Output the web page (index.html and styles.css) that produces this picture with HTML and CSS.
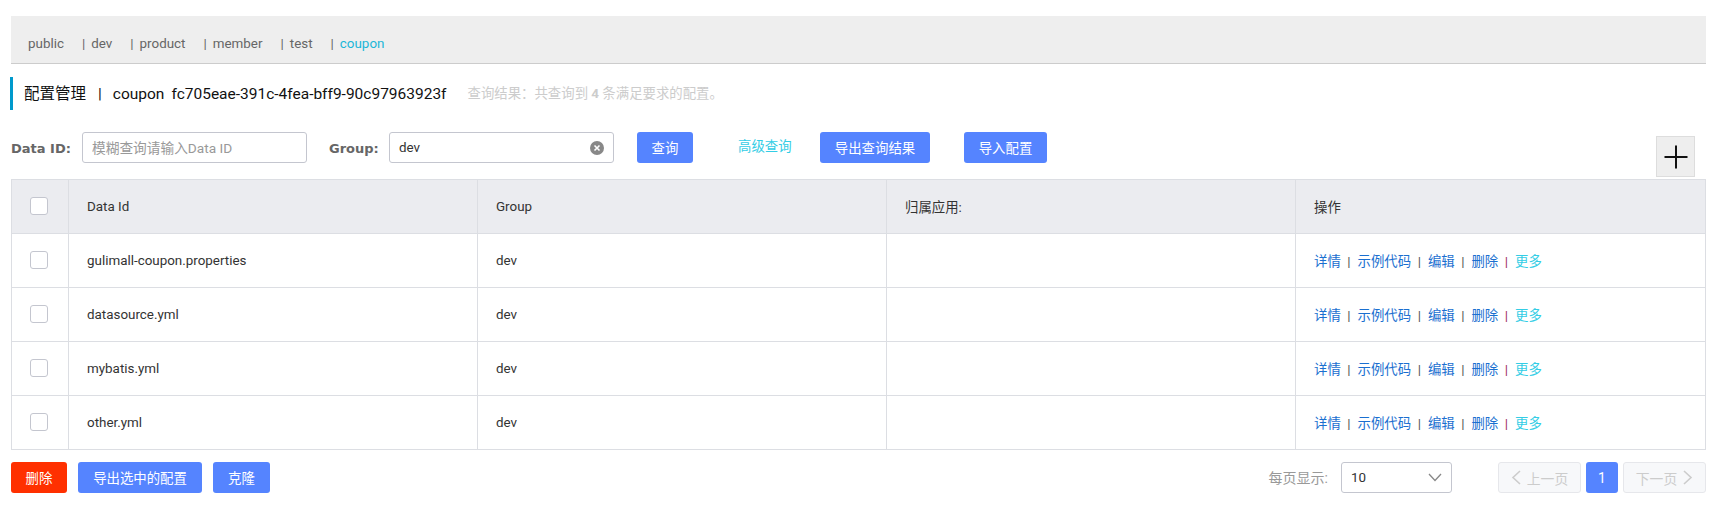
FILE: index.html
```html
<!DOCTYPE html>
<html>
<head>
    <title>配置管理</title>
    <link rel="stylesheet" href="styles.css">
</head>
<body>
    <div class="tabs">
        <span class="tab">public</span>
        <span class="tab"><i>|</i>dev</span>
        <span class="tab"><i>|</i>product</span>
        <span class="tab"><i>|</i>member</span>
        <span class="tab"><i>|</i>test</span>
        <span class="tab active"><i>|</i>coupon</span>
    </div>
    <div class="title">
        <span class="title-main">配置管理<i class="title-sep">|</i>coupon<span class="title-ns">fc705eae-391c-4fea-bff9-90c97963923f</span></span>
        <span class="title-result">查询结果：共查询到 <b>4</b> 条满足要求的配置。</span>
    </div>
    <div class="search">
        <label class="search-label">Data ID:</label>
        <div class="input input-id"><span class="placeholder">模糊查询请输入Data ID</span></div>
        <label class="search-label label-group">Group:</label>
        <div class="input input-group">
            <span>dev</span>
            <svg class="clear" width="14" height="14" viewBox="0 0 14 14">
                <circle cx="7" cy="7" r="7" fill="#888"/>
                <path d="M4.5 4.5l5 5M9.5 4.5l-5 5" stroke="#fff" stroke-width="1.6"/>
            </svg>
        </div>
        <button class="btn btn-query">查询</button>
        <a class="advanced">高级查询</a>
        <button class="btn btn-export">导出查询结果</button>
        <button class="btn btn-import">导入配置</button>
        <div class="add">
            <svg width="24" height="24" viewBox="0 0 24 24">
                <path d="M12 .5v23M.5 12h23" stroke="#111" stroke-width="2"/>
            </svg>
        </div>
    </div>
    <table class="list">
        <thead>
            <tr>
                <th class="col-check"><span class="check"></span></th>
                <th class="col-id">Data Id</th>
                <th class="col-group">Group</th>
                <th class="col-app cjk">归属应用:</th>
                <th class="cjk">操作</th>
            </tr>
        </thead>
        <tbody>
            <tr>
                <td class="col-check"><span class="check"></span></td>
                <td>gulimall-coupon.properties</td>
                <td>dev</td>
                <td></td>
                <td class="ops cjk"><a>详情</a><i>|</i><a>示例代码</a><i>|</i><a>编辑</a><i>|</i><a>删除</a><i class="last">|</i><a class="more">更多</a></td>
            </tr>
            <tr>
                <td class="col-check"><span class="check"></span></td>
                <td>datasource.yml</td>
                <td>dev</td>
                <td></td>
                <td class="ops cjk"><a>详情</a><i>|</i><a>示例代码</a><i>|</i><a>编辑</a><i>|</i><a>删除</a><i class="last">|</i><a class="more">更多</a></td>
            </tr>
            <tr>
                <td class="col-check"><span class="check"></span></td>
                <td>mybatis.yml</td>
                <td>dev</td>
                <td></td>
                <td class="ops cjk"><a>详情</a><i>|</i><a>示例代码</a><i>|</i><a>编辑</a><i>|</i><a>删除</a><i class="last">|</i><a class="more">更多</a></td>
            </tr>
            <tr>
                <td class="col-check"><span class="check"></span></td>
                <td>other.yml</td>
                <td>dev</td>
                <td></td>
                <td class="ops cjk"><a>详情</a><i>|</i><a>示例代码</a><i>|</i><a>编辑</a><i>|</i><a>删除</a><i class="last">|</i><a class="more">更多</a></td>
            </tr>
        </tbody>
    </table>
    <div class="footer">
        <button class="btn btn-delete">删除</button>
        <button class="btn btn-selected">导出选中的配置</button>
        <button class="btn btn-clone">克隆</button>
        <span class="page-size-label">每页显示:</span>
        <div class="select">
            <span>10</span>
            <svg width="14" height="9" viewBox="0 0 14 9">
                <path d="M1 1l6 6.5L13 1" fill="none" stroke="#888" stroke-width="1.3"/>
            </svg>
        </div>
        <button class="page page-prev">
            <svg width="10" height="15" viewBox="0 0 10 15"><path d="M9 1L2 7.5l7 6.5" fill="none" stroke="#ccc" stroke-width="1.6"/></svg>
            上一页
        </button>
        <button class="page page-current">1</button>
        <button class="page page-next">
            下一页
            <svg width="10" height="15" viewBox="0 0 10 15"><path d="M1 1l7 6.5-7 6.5" fill="none" stroke="#ccc" stroke-width="1.6"/></svg>
        </button>
    </div>
</body>
</html>
```

FILE: styles.css
```css
* {
    box-sizing: border-box;
}
body {
    margin: 0;
    padding: 16px 10px 0 11px;
    font-family: Roboto, "Noto Sans CJK SC", sans-serif;
    font-size: 13.4px;
    color: #333;
    background-color: #fff;
}
i {
    font-style: normal;
}
.tabs {
    height: 48px;
    padding: 7px 0 0 17px;
    display: flex;
    align-items: center;
    background-color: #eee;
    border-bottom: 1px solid #ccc;
    color: #666;
}
.tab {
    margin-right: 18px;
}
.tab i {
    margin-right: 6px;
}
.tab.active {
    color: #1cb6d8;
}
.tab.active i {
    color: #666;
}
.title {
    height: 33px;
    margin: 13px 0 0 -1px;
    padding: 0 0 4px 11px;
    display: flex;
    align-items: center;
    border-left: 3px solid #09c;
}
.title-main {
    font-size: 15.5px;
    color: #111;
}
.title-sep {
    margin: 0 11px 0 12px;
}
.title-ns {
    margin-left: 7px;
}
.title-result {
    margin-left: 21px;
    font-size: 13.4px;
    color: #ccc;
}
.search {
    height: 47px;
    margin-top: 22px;
    display: flex;
    align-items: flex-start;
}
.search-label {
    width: 71px;
    font-family: "DejaVu Sans", sans-serif;
    font-size: 13px;
    line-height: 33px;
    font-weight: bold;
    color: #666;
}
.label-group {
    width: 60px;
    margin-left: 22px;
}
.input {
    height: 31px;
    padding: 0 10px 0 9px;
    display: flex;
    align-items: center;
    justify-content: space-between;
    border: 1px solid #c4c6cf;
    border-radius: 3px;
}
.input-id {
    width: 225px;
    padding-bottom: 2px;
}
.input-group {
    width: 225px;
    color: #333;
}
.placeholder {
    font-size: 13.7px;
    color: #999;
}
.clear {
    margin-right: -1px;
}
.btn {
    height: 31px;
    padding: 0 0 2px;
    border: none;
    border-radius: 3px;
    font-family: inherit;
    font-size: 13.4px;
    color: #fff;
    background-color: #5584ff;
}
.btn-query {
    width: 56px;
    margin-left: 23px;
}
.advanced {
    width: 56px;
    margin-left: 45px;
    line-height: 30px;
    color: #33cde5;
}
.btn-export {
    width: 110px;
    margin-left: 26px;
}
.btn-import {
    width: 83px;
    margin-left: 34px;
}
.add {
    width: 39px;
    height: 41px;
    margin: 4px 11px 0 auto;
    display: flex;
    align-items: center;
    justify-content: center;
    background-color: #eee;
    border: 1px solid #ddd;
}
.list {
    width: 1695px;
    border-collapse: collapse;
    table-layout: fixed;
}
.list th,
.list td {
    height: 54px;
    padding: 0 18px;
    text-align: left;
    font-weight: normal;
    border: 1px solid #dcdee3;
}
.list th {
    background-color: #ebecf0;
}
.list .cjk {
    padding-bottom: 2px;
}
.list .col-check {
    width: 57px;
    padding: 0;
}
.col-id,
.col-group,
.col-app {
    width: 409px;
}
.check {
    width: 18px;
    height: 18px;
    display: block;
    margin: -2px 0 0 18px;
    border: 1px solid #c4c6cf;
    border-radius: 3px;
    background-color: #fff;
}
.ops a {
    color: #1a6fd0;
}
.ops i {
    margin: 0 7px 0 6.5px;
    color: #555;
}
.ops i.last {
    color: #a03060;
}
.ops a.more {
    color: #33cde5;
}
.footer {
    margin-top: 12px;
    display: flex;
    align-items: center;
}
.btn-delete {
    width: 56px;
    background-color: #ff3000;
}
.btn-selected {
    width: 124px;
    margin-left: 11px;
}
.btn-clone {
    width: 57px;
    margin-left: 11px;
}
.page-size-label {
    margin: 0 0 2px auto;
    font-size: 14px;
    color: #999;
}
.select {
    width: 111px;
    height: 31px;
    margin-left: 13px;
    padding: 0 9px;
    display: flex;
    align-items: center;
    justify-content: space-between;
    border: 1px solid #c4c6cf;
    border-radius: 3px;
}
.page {
    height: 31px;
    padding: 0;
    display: flex;
    align-items: center;
    justify-content: center;
    gap: 6px;
    font-family: inherit;
    font-size: 13.8px;
    border: 1px solid #e6e7eb;
    border-radius: 3px;
    color: #ccc;
    background-color: #f7f8fa;
}
.page-prev {
    width: 83px;
    margin-left: 46px;
}
.page-current {
    width: 32px;
    margin-left: 5px;
    border: none;
    color: #fff;
    background-color: #5584ff;
}
.page-next {
    width: 83px;
    margin-left: 5px;
}
```
